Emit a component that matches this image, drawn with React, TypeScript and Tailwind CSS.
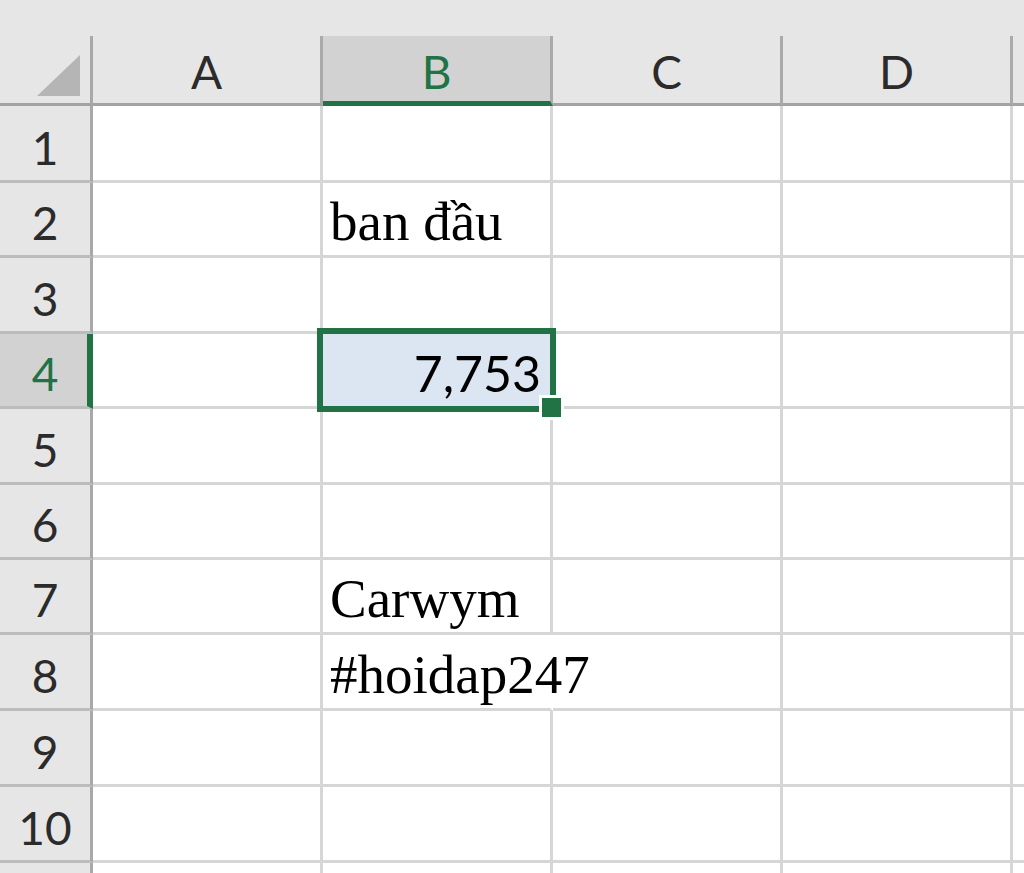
import React from "react";

type Row = { n: number; h: string; b?: string; sel?: boolean; overflow?: boolean; hideNum?: boolean };

const ROWS: Row[] = [
  { n: 1, h: "h-[77px]" },
  { n: 2, h: "h-[75px]", b: "ban đầu" },
  { n: 3, h: "h-[76px]" },
  { n: 4, h: "h-[75px]", sel: true },
  { n: 5, h: "h-[76px]" },
  { n: 6, h: "h-[75px]" },
  { n: 7, h: "h-[75px]", b: "Carwym" },
  { n: 8, h: "h-[76px]", b: "#hoidap247", overflow: true },
  { n: 9, h: "h-[76px]" },
  { n: 10, h: "h-[76px]" },
  { n: 11, h: "h-[76px]", hideNum: true },
];

const headerFont = { fontFamily: "Lato, 'Noto Sans', sans-serif" };
const serifFont = { fontFamily: "'Liberation Serif', 'Times New Roman', serif" };

function ColHeader({ label, sel }: { label: string; sel?: boolean }) {
  if (sel) {
    return (
      <div
        className="w-[230px] shrink-0 bg-[#d2d2d2] border-r-[3px] border-r-[#aaaaaa] border-b-[5px] border-b-[#217346] flex items-end justify-center pb-[6px] text-[46px] leading-none text-[#217346]"
        style={headerFont}
      >
        {label}
      </div>
    );
  }
  return (
    <div
      className="w-[230px] shrink-0 border-r-[3px] border-r-[#aaaaaa] border-b-[3px] border-b-[#a3a3a3] flex items-end justify-center pb-[8px] text-[46px] leading-none text-[#2b2b2b]"
      style={headerFont}
    >
      {label}
    </div>
  );
}

function RowHeader({ n, sel, hideNum }: { n: number; sel?: boolean; hideNum?: boolean }) {
  if (sel) {
    return (
      <div
        className="w-[93px] shrink-0 bg-[#d2d2d2] border-r-[6px] border-r-[#217346] border-b-[3px] border-b-[#bcbcbc] flex items-end justify-center pl-[3px] pb-[9px] text-[46px] leading-none text-[#217346]"
        style={headerFont}
      >
        {n}
      </div>
    );
  }
  return (
    <div
      className="w-[93px] shrink-0 bg-[#e6e6e6] border-r-[3px] border-r-[#a8a8a8] border-b-[3px] border-b-[#bcbcbc] flex items-end justify-center pb-[9px] text-[46px] leading-none text-[#2b2b2b]"
      style={headerFont}
    >
      {hideNum ? null : n}
    </div>
  );
}

function Cell({ children, noRight }: { children?: React.ReactNode; noRight?: boolean }) {
  return (
    <div
      className={
        noRight
          ? "w-[230px] shrink-0 border-b-[3px] border-b-[#d6d6d6] border-r-[3px] border-r-white flex items-end pl-[7px] pb-[6px] text-[55px] leading-none text-black whitespace-nowrap overflow-visible"
          : "w-[230px] shrink-0 border-b-[3px] border-b-[#d6d6d6] border-r-[3px] border-r-[#d6d6d6] flex items-end pl-[7px] pb-[6px] text-[55px] leading-none text-black whitespace-nowrap overflow-visible"
      }
      style={serifFont}
    >
      {children}
    </div>
  );
}

function SelectedCell() {
  return (
    <div className="relative w-[230px] shrink-0 bg-[#dce6f2] border-b-[3px] border-b-[#d6d6d6] border-r-[3px] border-r-[#d6d6d6] flex items-end justify-end pr-[9px] pb-[8px]">
      <span className="text-[50px] leading-none text-black" style={headerFont}>
        7,753
      </span>
      <div className="absolute -left-[6px] -top-[6px] -right-[6px] -bottom-[6px] border-[6px] border-[#217346] pointer-events-none">
        <div className="absolute -right-[11px] -bottom-[11px] w-[19px] h-[19px] bg-[#217346] ring-[3px] ring-white" />
      </div>
    </div>
  );
}

export default function App() {
  return (
    <div className="w-[1024px] h-[873px] overflow-hidden bg-white flex flex-col">
      <div className="h-[36px] shrink-0 bg-[#e6e6e6]" />
      <div className="h-[70px] shrink-0 flex bg-[#e6e6e6]">
        <div className="w-[93px] shrink-0 border-r-[3px] border-r-[#a8a8a8] border-b-[3px] border-b-[#a3a3a3] flex items-end justify-end pr-[10px] pb-[7px]">
          <svg width="43" height="41" viewBox="0 0 43 41">
            <polygon points="43,0 43,41 0,41" fill="#b5b5b5" />
          </svg>
        </div>
        <ColHeader label="A" />
        <ColHeader label="B" sel />
        <ColHeader label="C" />
        <ColHeader label="D" />
        <div className="flex-1 border-b-[3px] border-b-[#a3a3a3]" />
      </div>
      {ROWS.map((r) => (
        <div key={r.n} className={`${r.h} shrink-0 flex`}>
          <RowHeader n={r.n} sel={r.sel} hideNum={r.hideNum} />
          <Cell />
          {r.sel ? <SelectedCell /> : <Cell noRight={r.overflow}>{r.b}</Cell>}
          <Cell />
          <Cell />
          <div className="flex-1 border-b-[3px] border-b-[#d6d6d6]" />
        </div>
      ))}
    </div>
  );
}
